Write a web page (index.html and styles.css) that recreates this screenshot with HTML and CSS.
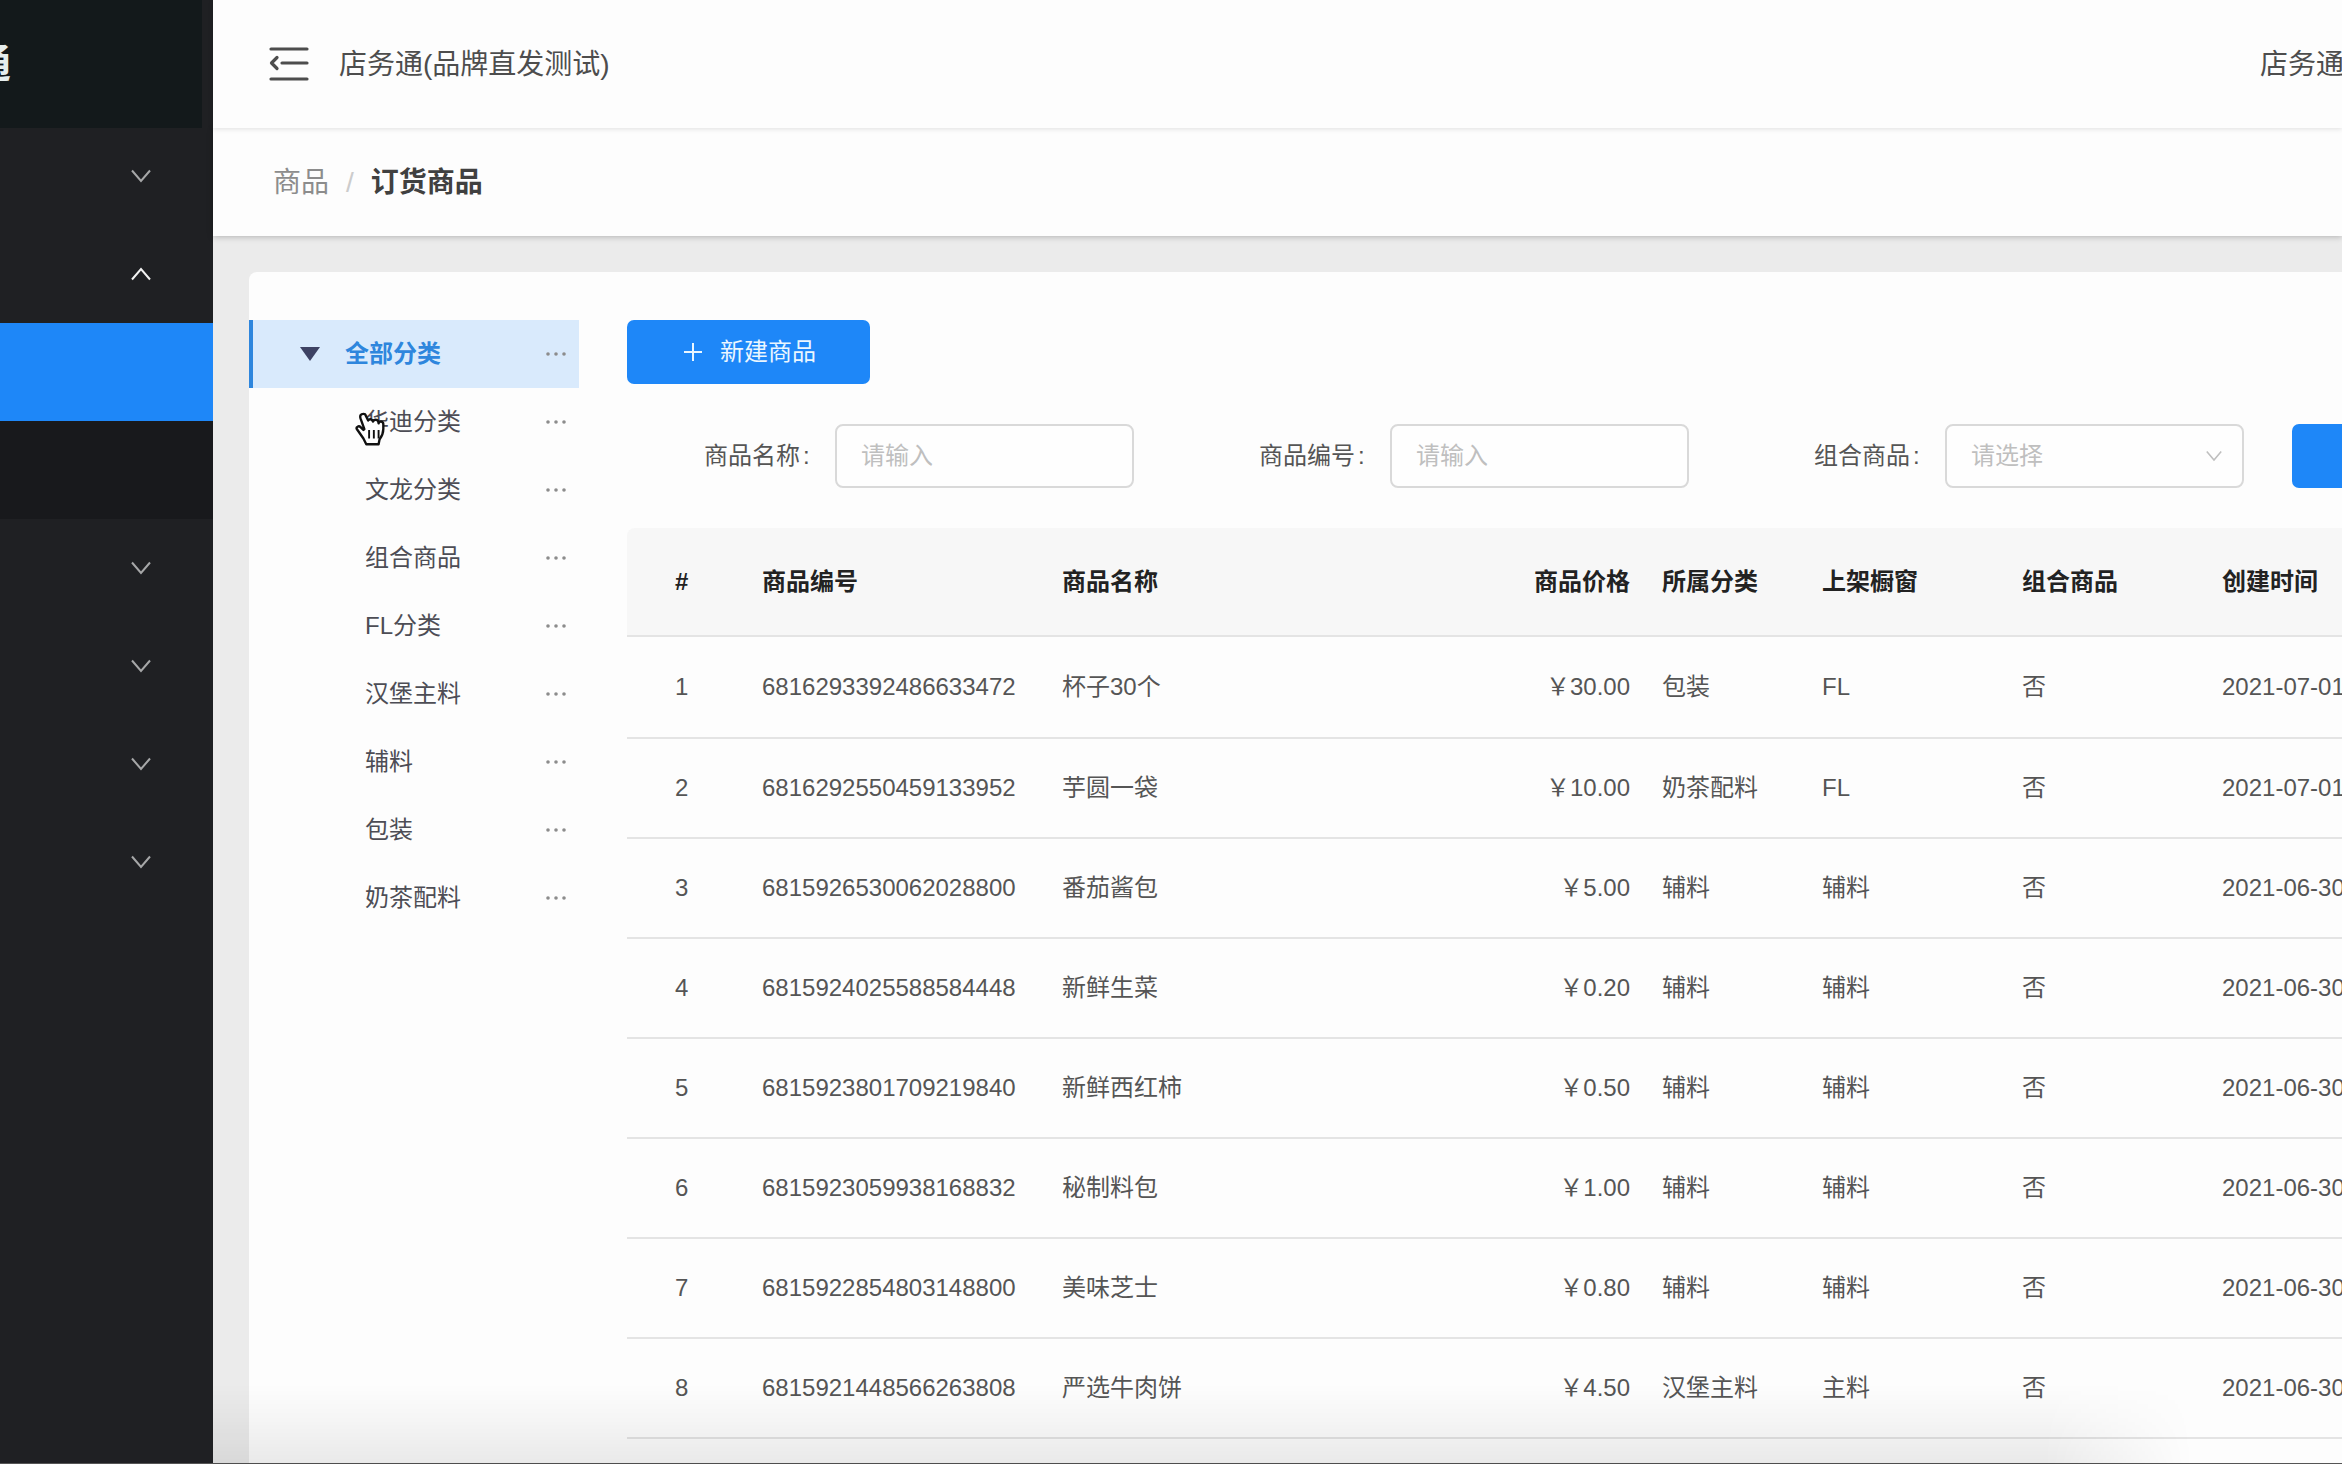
FILE: index.html
```html
<!DOCTYPE html>
<html lang="zh-CN">
<head>
<meta charset="utf-8">
<title>订货商品</title>
<link rel="stylesheet" href="styles.css">
</head>
<body>
<svg class="defs" aria-hidden="true">
  <symbol id="down" viewBox="0 0 20 14"><path d="M1 1.5l9 10.500l9-10.500" fill="none" stroke="currentColor" stroke-width="2"/></symbol>
  <symbol id="more" viewBox="0 0 24 6"><circle cx="4" cy="3" r="1.800"/><circle cx="12" cy="3" r="1.800"/><circle cx="20" cy="3" r="1.800"/></symbol>
</svg>
<div class="app">
  <aside class="sidebar">
    <div class="logo"><span>通</span></div>
    <nav class="menu" aria-label="主菜单">
      <button class="menu-item" type="button" aria-label="展开"><svg><use href="#down"/></svg></button>
      <button class="menu-item open" type="button" aria-label="收起"><svg><use href="#down"/></svg></button>
      <a class="menu-item current" href="#" aria-current="page"></a>
      <a class="menu-item sub" href="#"></a>
      <button class="menu-item" type="button" aria-label="展开"><svg><use href="#down"/></svg></button>
      <button class="menu-item" type="button" aria-label="展开"><svg><use href="#down"/></svg></button>
      <button class="menu-item" type="button" aria-label="展开"><svg><use href="#down"/></svg></button>
      <button class="menu-item" type="button" aria-label="展开"><svg><use href="#down"/></svg></button>
    </nav>
  </aside>
  <div class="main">
    <header class="topbar">
      <button class="fold" type="button" aria-label="收起菜单">
        <svg viewBox="0 0 40 34"><path d="M2 2h36M13 16h25M2 32h36M8 10.500l-5.500 5.500l5.500 5.500" fill="none" stroke="currentColor" stroke-width="3.200" stroke-linecap="round" stroke-linejoin="round"/></svg>
      </button>
      <span>店务通(品牌直发测试)</span>
      <span class="user">店务通</span>
    </header>
    <nav class="crumbs" aria-label="面包屑">
      <a href="#">商品</a><span class="slash">/</span><strong>订货商品</strong>
    </nav>
    <main class="card">
      <ul class="tree">
        <li class="node root"><svg class="caret" viewBox="0 0 20 14"><path d="M0 0h20l-10 14z"/></svg><span>全部分类</span><button type="button" aria-label="更多"><svg><use href="#more"/></svg></button></li>
        <li class="node"><span>华迪分类</span><button type="button" aria-label="更多"><svg><use href="#more"/></svg></button>
          <svg class="pointer" viewBox="0 0 32 38"><path d="M8 2c-3 0-4 2-3 5l4 11-1 1-3-3c-2-2-5 0-4 2l7 10 3 6h13l1-5c3-4 4-7 4-11v-5c0-3-4-4-5-1 0-4-4-5-6-2-1-3-4-3-5-1l-3-6c0-1-1-1-2-1z" fill="#fff" stroke="#111" stroke-width="2.500" stroke-linejoin="round"/><path d="M14 19v9M19 19v9M24 19v9" stroke="#111" stroke-width="2"/></svg></li>
        <li class="node"><span>文龙分类</span><button type="button" aria-label="更多"><svg><use href="#more"/></svg></button></li>
        <li class="node"><span>组合商品</span><button type="button" aria-label="更多"><svg><use href="#more"/></svg></button></li>
        <li class="node"><span>FL分类</span><button type="button" aria-label="更多"><svg><use href="#more"/></svg></button></li>
        <li class="node"><span>汉堡主料</span><button type="button" aria-label="更多"><svg><use href="#more"/></svg></button></li>
        <li class="node"><span>辅料</span><button type="button" aria-label="更多"><svg><use href="#more"/></svg></button></li>
        <li class="node"><span>包装</span><button type="button" aria-label="更多"><svg><use href="#more"/></svg></button></li>
        <li class="node"><span>奶茶配料</span><button type="button" aria-label="更多"><svg><use href="#more"/></svg></button></li>
      </ul>
      <section class="goods">
        <button class="primary create" type="button"><svg viewBox="0 0 24 24"><path d="M12 3v18M3 12h18" stroke="currentColor" stroke-width="2"/></svg>新建商品</button>
        <form class="filters">
          <div class="field"><label for="name">商品名称<span class="colon">:</span></label><input id="name" type="text" placeholder="请输入"></div>
          <div class="field"><label for="code">商品编号<span class="colon">:</span></label><input id="code" type="text" placeholder="请输入"></div>
          <div class="field"><label for="combo">组合商品<span class="colon">:</span></label><div class="select"><select id="combo"><option>请选择</option></select><svg><use href="#down"/></svg></div></div>
          <button class="primary search" type="submit" aria-label="查询"></button>
        </form>
        <table>
          <colgroup><col class="c-no"><col class="c-id"><col class="c-name"><col class="c-price"><col class="c-cat"><col class="c-shelf"><col class="c-combo"><col class="c-time"></colgroup>
          <thead><tr><th>#</th><th>商品编号</th><th>商品名称</th><th class="num">商品价格</th><th>所属分类</th><th>上架橱窗</th><th>组合商品</th><th>创建时间</th></tr></thead>
          <tbody>
            <tr><td>1</td><td>6816293392486633472</td><td>杯子30个</td><td class="num">￥30.00</td><td>包装</td><td>FL</td><td>否</td><td>2021-07-01</td></tr>
            <tr><td>2</td><td>6816292550459133952</td><td>芋圆一袋</td><td class="num">￥10.00</td><td>奶茶配料</td><td>FL</td><td>否</td><td>2021-07-01</td></tr>
            <tr><td>3</td><td>6815926530062028800</td><td>番茄酱包</td><td class="num">￥5.00</td><td>辅料</td><td>辅料</td><td>否</td><td>2021-06-30</td></tr>
            <tr><td>4</td><td>6815924025588584448</td><td>新鲜生菜</td><td class="num">￥0.20</td><td>辅料</td><td>辅料</td><td>否</td><td>2021-06-30</td></tr>
            <tr><td>5</td><td>6815923801709219840</td><td>新鲜西红柿</td><td class="num">￥0.50</td><td>辅料</td><td>辅料</td><td>否</td><td>2021-06-30</td></tr>
            <tr><td>6</td><td>6815923059938168832</td><td>秘制料包</td><td class="num">￥1.00</td><td>辅料</td><td>辅料</td><td>否</td><td>2021-06-30</td></tr>
            <tr><td>7</td><td>6815922854803148800</td><td>美味芝士</td><td class="num">￥0.80</td><td>辅料</td><td>辅料</td><td>否</td><td>2021-06-30</td></tr>
            <tr><td>8</td><td>6815921448566263808</td><td>严选牛肉饼</td><td class="num">￥4.50</td><td>汉堡主料</td><td>主料</td><td>否</td><td>2021-06-30</td></tr>
          </tbody>
        </table>
      </section>
    </main>
  </div>
</div>
<div class="shade"></div>
</body>
</html>
```
FILE: styles.css
```css
* { box-sizing: border-box; }
body {
  margin: 0;
  overflow: hidden;
  background: #ebebeb;
  color: #555;
  font: 24px/36px "Liberation Sans", "Noto Sans CJK SC", sans-serif;
}
button, input, select { font: inherit; color: inherit; margin: 0; }
button { border: 0; padding: 0; background: none; }
.defs { position: absolute; width: 0; height: 0; }
.app { display: flex; min-height: 100vh; }

/* sidebar */
.sidebar { flex: 0 0 213px; background: #1f2023; overflow: hidden; }
.logo {
  display: flex;
  align-items: center;
  justify-content: flex-end;
  height: 128px;
  margin-right: 11px;
  padding-right: 191px;
  background: #13191b;
  color: #e6eeee;
  font-size: 40px;
  font-weight: 700;
}
.menu { margin-top: -1px; }
.menu-item {
  display: flex;
  align-items: center;
  justify-content: flex-end;
  width: 100%;
  height: 98px;
  padding-right: 62px;
  color: #a6a7a8;
}
.menu-item svg { width: 20px; height: 14px; }
.menu-item.open { color: #f2f2f2; }
.menu-item.open svg { transform: rotate(180deg); }
.menu-item.current { background: #1e87f8; }
.menu-item.sub { background: #18191c; }

/* page head */
.main { flex: 1; min-width: 0; display: flex; flex-direction: column; }
.topbar, .crumbs { display: flex; align-items: center; background: #fdfdfd; font-size: 28px; position: relative; }
.topbar { height: 128px; padding-left: 56px; color: #4d4d4d; white-space: nowrap; z-index: 2; box-shadow: 0 1px 5px rgba(0,0,0,.12); }
.topbar span { padding-top: 2px; }
.fold { display: flex; width: 40px; margin-right: 30px; }
.fold svg { width: 40px; height: 34px; }
.user { margin-left: auto; width: 82px; }
.crumbs { height: 108px; padding: 2px 0 0 60px; gap: 17px; z-index: 1; box-shadow: 0 1px 6px rgba(0,0,0,.24); }
.crumbs a { color: #8c8c8c; text-decoration: none; }
.slash { color: #ccc; }
.crumbs strong { color: #404040; font-weight: 700; }

/* content card */
.card {
  flex: 1;
  display: flex;
  gap: 48px;
  margin: 36px 0 0 36px;
  padding-top: 48px;
  background: #fdfdfd;
  border-top-left-radius: 8px;
  overflow: hidden;
}
.tree { flex: 0 0 330px; margin: 0; padding: 0; list-style: none; }
.node { display: flex; align-items: center; height: 68px; padding: 0 11px 0 116px; position: relative; color: #4d4d55; }
.node button { display: flex; margin-left: auto; fill: #8c8c8c; }
.node button svg { width: 24px; height: 6px; }
.root { padding-left: 47px; border-left: 4px solid #2e86dd; background: #d9eafc; color: #2e86dd; font-weight: 700; }
.caret { width: 20px; height: 14px; margin-right: 25px; fill: #3d4263; }
.pointer { position: absolute; left: 106px; top: 24px; width: 32px; height: 36px; }

.goods { flex: 1; min-width: 0; }
.primary { height: 64px; border-radius: 7px; background: #1e87f8; color: #eaf6ff; }
.create { display: flex; align-items: center; gap: 15px; padding: 0 54px; }
.create svg { width: 24px; height: 24px; }
.filters { display: flex; margin: 40px 0; padding-left: 77px; }
.field { display: flex; align-items: center; margin-right: 125px; }
.field label { white-space: nowrap; width: 131px; }
.colon { margin-left: 3px; }
.field input, .select select {
  width: 299px;
  height: 64px;
  padding: 0 24px;
  border: 2px solid #d9d9d9;
  border-radius: 8px;
  background: #fefefe;
  outline: 0;
}
.field input::placeholder { color: #bfbfbf; opacity: 1; }
.select { position: relative; color: #bfbfbf; }
.select select { appearance: none; display: block; }
.select svg { position: absolute; right: 22px; top: 26px; width: 16px; height: 12px; stroke-width: 3; pointer-events: none; }
.field:nth-child(3) { margin-right: 48px; }
.search { flex: 0 0 144px; }

table { table-layout: fixed; width: 2000px; border-collapse: separate; border-spacing: 0; }
.c-no { width: 119px; }
.c-id { width: 300px; }
.c-name { width: 400px; }
.c-price, .c-shelf, .c-combo { width: 200px; }
.c-cat { width: 160px; }
th, td { height: 100px; padding: 0 16px; border-bottom: 2px solid #e4e4e4; text-align: left; white-space: nowrap; }
th { height: 109px; background: #f7f7f7; color: #222; font-weight: 700; }
th:first-child, td:first-child { padding-left: 48px; }
th:first-child { border-top-left-radius: 8px; }
th.num, td.num { text-align: right; }
tbody tr:first-child td { height: 102px; }

/* soft shade along the lower edge of the window */
.shade {
  position: fixed;
  left: 213px;
  right: 0;
  bottom: 0;
  height: 80px;
  background: linear-gradient(rgba(0,0,0,0), rgba(0,0,0,.03) 45%, rgba(0,0,0,.08));
  mask-image: linear-gradient(90deg, #000 86%, transparent 93%);
  pointer-events: none;
}
.app { border-bottom: 1px solid #555; }
```
